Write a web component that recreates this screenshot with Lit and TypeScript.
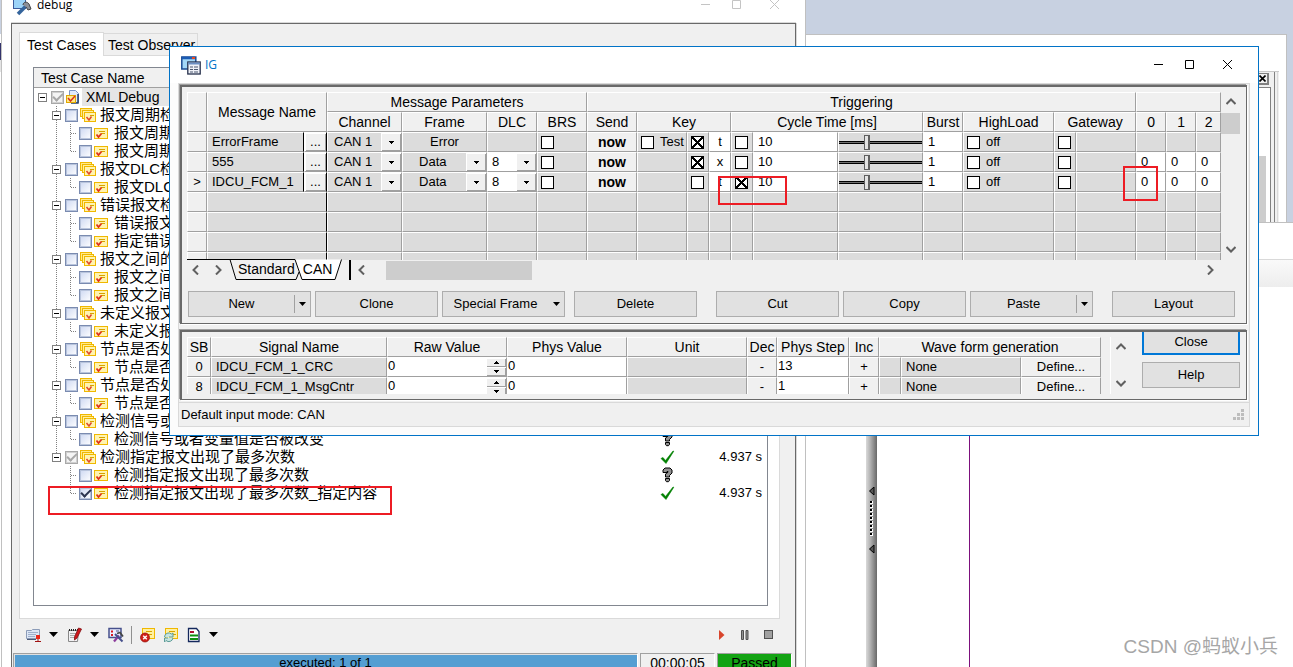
import { LitElement, html, svg, css, nothing } from "lit";
import { customElement } from "lit/decorators.js";
import { classMap } from "lit/directives/class-map.js";

const shared = css`
  * { box-sizing: border-box; }
  button, input, select {
    font: inherit; color: inherit; margin: 0; padding: 0; border: 0;
    background: none; border-radius: 0; outline: none; appearance: none;
  }
  svg { display: block; flex: none; }
`;

const arrowDown = (w = 9, h = 5) => html`
  <svg width=${w} height=${h} viewBox="0 0 9 5"><path d="M0 0h9L4.500 5z" fill="#000" /></svg>`;
const tinyDown = html`<svg width="5" height="3" viewBox="0 0 5 3"><path d="M0 0h5v1H4v1H3v1H2V2H1V1H0z" fill="#000" /></svg>`;
const tinyUp = html`<svg width="5" height="3" viewBox="0 0 5 3"><path d="M0 3h5V2H4V1H3V0H2v1H1v1H0z" fill="#000" /></svg>`;

/* ---------------------------------------------------------------- debug */

type Kind = "root" | "group" | "test";
interface Node {
  kind: Kind; text: string; last?: boolean; check?: "on" | "mixed"; verdict?: "ok" | "none"; time?: string;
}
const g = (text: string, more: Partial<Node> = {}): Node => ({ kind: "group", text, verdict: "none", ...more });
const t = (text: string, more: Partial<Node> = {}): Node => ({ kind: "test", text, verdict: "none", ...more });

const TREE: Node[] = [
  { kind: "root", text: "XML Debug", check: "mixed", verdict: "ok" },
  g("报文周期检测"), t("报文周期检测"), t("报文周期检测", { last: true }),
  g("报文DLC检测"), t("报文DLC检测", { last: true }),
  g("错误报文检测"), t("错误报文检测"), t("指定错误报文检测", { last: true }),
  g("报文之间的间隔"), t("报文之间的间隔"), t("报文之间的间隔", { last: true }),
  g("未定义报文检测"), t("未定义报文检测", { last: true }),
  g("节点是否处于激活"), t("节点是否处于激活", { last: true }),
  g("节点是否处于休眠"), t("节点是否处于休眠", { last: true }),
  g("检测信号或者变量值是否被改变"), t("检测信号或者变量值是否被改变", { last: true }),
  g("检测指定报文出现了最多次数", { check: "mixed", verdict: "ok", time: "4.937 s", last: true }),
  t("检测指定报文出现了最多次数"),
  t("检测指定报文出现了最多次数_指定内容", { check: "on", verdict: "ok", time: "4.937 s", last: true }),
];
const LAST_GROUP = TREE.map(n => n.kind === "group").lastIndexOf(true);

const expander = (x: number) => svg`
  <rect x=${x + 0.5} y="5.500" width="8" height="8" fill="#fff" stroke="#808080" />
  <path d="M${x + 2} 9.500h5" stroke="#000" />`;
const dots = (d: string) => svg`<path d=${d} stroke="#808080" stroke-dasharray="1 1" fill="none" />`;

function guide(n: Node, i: number) {
  if (n.kind === "root")
    return html`<button class="twist" aria-label="Collapse"><svg width="17" height="18">${expander(4)}</svg></button>`;
  if (n.kind === "group")
    return html`<button class="twist" aria-label="Collapse"><svg width="31" height="18">
      ${dots(i === LAST_GROUP ? "M22.500 0V9" : "M22.500 0V18")}${expander(18)}</svg></button>`;
  return html`<svg width="45" height="18">
    ${i < LAST_GROUP ? dots("M22.500 0V18") : nothing}
    ${dots(n.last ? "M36.500 0V10" : "M36.500 0V18")}${dots("M37 9.500H42")}</svg>`;
}

const rootIcon = html`<svg width="16" height="16" viewBox="0 0 16 16">
  <path d="M4.500 1.500h6l3 3v9h-9z" fill="#dfe9fb" stroke="#7c94c4" /><path d="M13 5v9H6" stroke="#27406e" fill="none" stroke-width="1.500" />
  <rect x="1.500" y="6.500" width="9" height="7" fill="#ffe98a" stroke="#e0a800" />
  <path d="M3 9l2.500 3L10 7" stroke="#d8321c" stroke-width="1.500" fill="none" /></svg>`;
const groupIcon = html`<svg width="18" height="16" viewBox="0 0 18 16">
  <rect x="1.500" y="1.500" width="11" height="8" fill="#ffe98a" stroke="#f0b800" />
  <rect x="3.500" y="3.500" width="11" height="8" fill="#ffef9f" stroke="#f0b800" />
  <rect x="5.500" y="5.500" width="11" height="9" fill="#fff3b0" stroke="#f0b800" />
  <path d="M11 8.500h4" stroke="#d8a400" />
  <path d="M7.500 10l2.500 3 2.500-3.500" stroke="#e04a2c" stroke-width="1.500" fill="none" /></svg>`;
const testIcon = html`<svg width="16" height="16" viewBox="0 0 16 16">
  <rect x="1.500" y="3.500" width="13" height="10" fill="#fff3b0" stroke="#f0b800" />
  <path d="M6 6.500h6M8 8.500h4" stroke="#d8a400" />
  <path d="M3.500 9.500l2 2.500L8.500 8.500" stroke="#e0321c" stroke-width="1.800" fill="none" /></svg>`;
const okIcon = html`<svg width="16" height="16" viewBox="0 0 16 16">
  <path d="M1 9.500L3 8.500l2.500 3L13 2l.8.2L6 14.500z" fill="#008000" stroke="#008000" stroke-width=".6" /></svg>`;
const noneIcon = html`<svg width="16" height="16" viewBox="0 0 16 16">
  <path d="M3 5.500V3L5 1h5l2 2v3L9.500 8.500V10h-4V7L8 5.200V4.500H7v1z" fill="#909090" stroke="#000" stroke-linejoin="round" />
  <path d="M5.500 11.500h4v2l-1 1.200h-2l-1-1.200z" fill="#909090" stroke="#000" /></svg>`;

const toolIcons = {
  report: html`<svg width="16" height="16" viewBox="0 0 16 16"><path d="M.5 3.500h5l1-1h7v9H.5z" fill="#dce6f6" stroke="#8c9cb8" />
    <path d="M2 5.500h10M2 7.500h8M2 9.500h7" stroke="#9fb0cc" /><path d="M1 12.500h9" stroke="#4c5a78" />
    <rect x="10" y="8" width="4" height="4" fill="#e8281c" /><path d="M9 14.500h6M12 12v2" stroke="#a01010" /></svg>`,
  edit: html`<svg width="16" height="16" viewBox="0 0 16 16"><path d="M1.500 3.500h10l-1 11h-9z" fill="#f2f2f4" stroke="#888" />
    <path d="M2 3h9" stroke="#222" stroke-width="2" stroke-dasharray="1 1" /><path d="M3 6.500h6M3 8.500h5M3 10.500h4" stroke="#aaa" />
    <path d="M11.500 1l3 1-4.500 9-2.500 2v-3z" fill="#d0181c" stroke="#7c0c10" stroke-width=".8" /></svg>`,
  config: html`<svg width="16" height="16" viewBox="0 0 16 16"><rect x="1" y="1.500" width="12" height="9" fill="#eceeff" stroke="#46508c" stroke-width="1.500" />
    <path d="M3 4.500h2M3 8h2" stroke="#d81820" stroke-width="2" /><path d="M8 4h3" stroke="#444c84" />
    <path d="M6 14.500l5-6" stroke="#8c3c9c" stroke-width="2.200" /><path d="M7 7l7.500 7.500" stroke="#46508c" stroke-width="2" /><path d="M9 6.500l3-1 3 4" stroke="#444" stroke-width="1.800" fill="none" /></svg>`,
  remove: html`<svg width="16" height="16" viewBox="0 0 16 16"><rect x="2.500" y="1.500" width="12" height="10" fill="#fff0a0" stroke="#f0b800" />
    <path d="M6 4.500h6M8 7.500h4" stroke="#d8a400" /><circle cx="5" cy="10.500" r="4.500" fill="#d02018" stroke="#8c0c08" stroke-width=".7" />
    <path d="M3.200 8.700l3.600 3.600M6.800 8.700l-3.600 3.600" stroke="#fff" stroke-width="1.400" /></svg>`,
  refresh: html`<svg width="16" height="16" viewBox="0 0 16 16"><rect x="2.500" y="1.500" width="12" height="10" fill="#fff0a0" stroke="#f0b800" />
    <path d="M6 4.500h6M10 7.500h3" stroke="#d8a400" /><path d="M1.500 10a4.200 4.200 0 0 1 7-3l1.500-1v4H6M10 11a4.200 4.200 0 0 1-7 2.500L1.500 15v-4H5" fill="#c8e4e0" stroke="#5c9c98" /></svg>`,
  doc: html`<svg width="14" height="16" viewBox="0 0 14 16"><path d="M1.500 1.500h8l2.500 3v10H1.500z" fill="#fff" stroke="#14285c" stroke-width="1.300" />
    <path d="M3 5h4" stroke="#b01030" stroke-width="2" /><path d="M3 8.500h8M3 12h8" stroke="#109010" stroke-width="2.200" /></svg>`,
};

@customElement("debug-window")
class DebugWindow extends LitElement {
  static styles = [shared, css`
    :host { display: flex; flex-direction: column; background: #fff; border: 1px solid #c0c0c0; border-width: 0 1px;
      font: 13px/18px "Liberation Sans", "Noto Sans CJK SC", sans-serif; color: #000; overflow: hidden; }
    .title { height: 35px; display: flex; align-items: center; padding: 0 20px 2px 10px; gap: 3px;
      font: 12px/16px "Open Sans", sans-serif; }
    .title .name { flex: 1; }
    .panel { flex: 1; min-height: 0; margin: 0 9px; border: 1px solid #696969; border-bottom: 0; background: #f0f0f0;
      box-shadow: 0 -1px #d9d9d9, 1px 0 #d9d9d9; display: flex; flex-direction: column; padding-top: 8px; }
    .tabs { display: flex; align-items: flex-end; margin-left: 7px; font-size: 14px; }
    .tab { height: 22px; padding: 0 0 0 4px; width: 94px; text-align: left; border: 1px solid #dadada; border-width: 1px 1px 0 0; overflow: hidden; white-space: nowrap; }
    .tab.active { height: 24px; width: 85px; padding: 0 0 0 7px; background: #fff; border-left-width: 1px; position: relative; margin-bottom: -1px; }
    .page { flex: 1; min-height: 0; margin: 0 15px 0 7px; border: 1px solid #dadada; background: #fff; padding: 11px 11px 12px 13px; display: flex; }
    .list { flex: 1; min-width: 0; border: 1px solid #828790; overflow: hidden; }
    .head { height: 20px; background: #f0f0f0; border-bottom: 1px solid #a0a0a0; padding: 1px 0 0 7px; font-size: 14px; }
    .rows { list-style: none; margin: 0; padding: 0; }
    .row { display: flex; align-items: center; height: 18px; padding-right: 5px; }
    .label { display: flex; align-items: center; flex: 1; min-width: 0; font-size: 15px; white-space: nowrap; cursor: default; }
    .label .txt { padding-left: 5px; line-height: 18px; }
    .group .txt { padding-left: 3px; }
    .root .label { font-size: 14px; }
    .root .txt { background: #e5e5e5; flex: 1; padding-left: 4px; margin-left: 1px; }
    .twist { display: block; }
    .box { width: 13px; height: 13px; border: 1px solid #7a8bb0; flex: none; margin-right: 1px;
      background: linear-gradient(135deg, #cdd8f2, #fff); box-shadow: inset 0 0 0 1px #b8c4dc; display: grid; place-items: center; }
    .box:checked::after { content: ""; width: 8px; height: 4px; border: solid #2c3550; border-width: 0 0 2px 2px; transform: rotate(-45deg); margin-top: -3px; }
    .box.mixed { background: #f4f4f4; border-color: #a8a8a8; box-shadow: inset 0 0 0 1px #d0d0d0; }
    .box.mixed:checked::after { border-color: #a8a8a8; }
    .time { width: 86px; text-align: right; }
    .tools { height: 34px; display: flex; align-items: center; padding: 0 19px 3px 14px; }
    .tools button { height: 20px; display: flex; align-items: center; justify-content: center; }
    .ico { width: 16px; }
    .tools .drop { width: 25px; padding-right: 2px; }
    .sep { width: 1px; height: 18px; background: #909090; margin: 0 8px 0 7px; }
    .gap { margin-left: 7px; }
    .run { margin-left: auto; display: flex; gap: 7px; }
    .status { height: 34px; display: flex; gap: 2px; padding: 0 3px 0 1px; font-size: 14px; text-align: center; }
    .cell { height: 24px; border: 1px solid #a0a0a0; border-color: #a0a0a0 #fff #fff #a0a0a0; width: 75px; }
    .cell.bar { flex: 1; width: auto; background: #559ed2; box-shadow: inset 1px 1px #e0e0e0; font-size: 13px; }
    .cell.pass { background: #13a313; }
  `];
  render() {
    return html`
      <header class="title">
        <svg width="22" height="22" viewBox="0 0 22 22"><rect x="1.500" y="2.500" width="12" height="12" fill="#9cd4f8" stroke="#3c5c9c" />
          <path d="M6 20l8-8" stroke="#34649c" stroke-width="3.500" /><path d="M11 11c0-3 4-4 6-1l2 5-3 1-2-3" fill="#8c9098" stroke="#444" /></svg>
        <span class="name">debug</span>
        <svg width="84" height="12" viewBox="0 0 84 12" fill="none" stroke="#c4c4c4"><path d="M0 5.500h9M31.500 1.500h8v8h-8zM69 1l9 9M78 1l-9 9" /></svg>
      </header>
      <section class="panel">
        <nav class="tabs"><button class="tab active">Test Cases</button><button class="tab">Test Observer</button></nav>
        <div class="page"><div class="list">
          <div class="head">Test Case Name</div>
          <ul class="rows">${TREE.map((n, i) => html`
            <li class="row ${n.kind}">
              ${guide(n, i)}
              <label class="label">
                <input type="checkbox" class=${classMap({ box: true, mixed: n.check === "mixed" })} .checked=${!!n.check} />
                ${n.kind === "root" ? rootIcon : n.kind === "group" ? groupIcon : testIcon}
                <span class="txt">${n.text}</span>
              </label>
              ${n.verdict === "ok" ? okIcon : noneIcon}
              <span class="time">${n.time ?? ""}</span>
            </li>`)}
          </ul>
        </div></div>
        <div class="tools">
          <button class="ico" aria-label="Report">${toolIcons.report}</button>
          <button class="drop" aria-label="Report options">${arrowDown()}</button>
          <button class="ico" aria-label="Edit">${toolIcons.edit}</button>
          <button class="drop" aria-label="Edit options">${arrowDown()}</button>
          <button class="ico" aria-label="Configure">${toolIcons.config}</button>
          <span class="sep"></span>
          <button class="ico" aria-label="Remove">${toolIcons.remove}</button>
          <button class="ico gap" aria-label="Refresh">${toolIcons.refresh}</button>
          <button class="ico gap" aria-label="Document">${toolIcons.doc}</button>
          <button class="drop" aria-label="Document options">${arrowDown()}</button>
          <div class="run">
            <button class="ico" aria-label="Start"><svg width="6" height="10"><path d="M0 0l5.500 5L0 10z" fill="#d8452c" /></svg></button>
            <button class="ico" aria-label="Pause"><svg width="8" height="10"><path d="M.5.5h2v9h-2zM5 .5h2v9H5z" fill="#909090" stroke="#505050" /></svg></button>
            <button class="ico" aria-label="Stop"><svg width="9" height="9"><rect x=".5" y=".5" width="8" height="8" fill="#a0a0a0" stroke="#505050" /></svg></button>
          </div>
        </div>
        <footer class="status">
          <div class="cell bar">executed: 1 of 1</div><div class="cell">00:00:05</div><div class="cell pass">Passed</div>
        </footer>
      </section>`;
  }
}

/* ------------------------------------------------------------------- IG */

interface Msg { name: string; frame: string; dlc: string; keyLabel?: string; keyOn: boolean; key: string; cycleOn: boolean; bytes: string[]; current?: boolean; }
const MESSAGES: Msg[] = [
  { name: "ErrorFrame", frame: "Error", dlc: "", keyLabel: "Test", keyOn: true, key: "t", cycleOn: false, bytes: [] },
  { name: "555", frame: "Data", dlc: "8", keyOn: true, key: "x", cycleOn: false, bytes: ["0", "0", "0"] },
  { name: "IDCU_FCM_1", frame: "Data", dlc: "8", keyOn: false, key: "t", cycleOn: true, bytes: ["0", "0", "0"], current: true },
];
const SIGNALS = [
  { sb: "0", name: "IDCU_FCM_1_CRC", step: "13" },
  { sb: "8", name: "IDCU_FCM_1_MsgCntr", step: "1" },
];
const COLS = [20, 97, 23, 75, 85, 50, 50, 50, 50, 22, 22, 22, 85, 85, 40, 91, 22, 60, 30, 30, 25];
const SIGNAL_COLS = [24, 176, 120, 120, 120, 30, 72, 30, 22, 120, 80];
const colgroup = (cols: number[]) => html`<colgroup>${cols.map(w => html`<col style="width:${w}px" />`)}</colgroup>`;

const chevron = (d: string) => html`<svg width="10" height="10" viewBox="0 0 10 10"><path d=${d} fill="none" stroke="#606060" stroke-width="2" /></svg>`;
const UP = "M.5 7L5 2.500 9.500 7", DOWN = "M.5 3L5 7.500 9.500 3", LEFT = "M7 .5L2.500 5 7 9.500", RIGHT = "M3 .5L7.500 5 3 9.500";

@customElement("ig-dialog")
class IgDialog extends LitElement {
  static styles = [shared, css`
    :host { display: flex; flex-direction: column; background: #fcfcfc; border: 1px solid #0173c7;
      font: 14px/18px "Liberation Sans", sans-serif; color: #000; }
    .title { height: 36px; background: #fff; display: flex; align-items: center; padding: 0 24px 0 11px; gap: 4px; font: 12px/16px "Open Sans", sans-serif; color: #0173c7; }
    .title .name { flex: 1; }
    .client { margin: 0 8px 8px; border: 1px solid #d9d9d9; background: #f0f0f0; }
    .panel { margin: 1px 2px 0 1px; border: solid #696969; border-width: 2px 1px 1px 2px; box-shadow: -1px -1px #a0a0a0, 1px 1px #fff; padding: 5px 5px 6px; }
    .panel.signals { margin-top: 6px; padding: 0 6px 5px 5px; display: flex; overflow: hidden; }
    .grid { display: flex; }
    .clip { flex: 1; min-width: 0; height: 168px; overflow: hidden; }
    .signals .clip { height: 57px; margin-top: 5px; }
    table { width: 100%; table-layout: fixed; border-collapse: separate; border-spacing: 0; }
    th, td { height: 20px; padding: 0; font-weight: normal; border: 1px solid; border-color: #fff #a0a0a0 #a0a0a0 #fff; overflow: hidden; white-space: nowrap; text-align: center; line-height: 18px; }
    td { background: #dcdcdc; font-size: 13px; }
    td.w { background: #fff; }
    td.plain { background: #f0f0f0; }
    td.l { text-align: left; padding-left: 4px; }
    td.blk { border-right-color: #000; }
    td input, td select, td button { display: block; width: 100%; height: 18px; }
    td.w input { padding-left: 4px; }
    td.key input { padding: 0; text-align: center; }
    td .bold { font-weight: bold; font-size: 14px; }
    .combo { display: flex; height: 18px; }
    .combo select { flex: 1; min-width: 0; padding-left: 6px; }
    .combo.mid select { padding-left: 16px; }
    .combo.num select { padding-left: 4px; }
    .btn3 { background: #f0f0f0; box-shadow: inset 1px 1px #fff, inset -1px -1px #a0a0a0; }
    .combo .btn3 { width: 20px; display: grid; place-items: center; }
    .checkline { display: flex; align-items: center; gap: 6px; padding-left: 3px; height: 18px; }
    td input.box { width: 13px; height: 13px; border: 1px solid #000; background: #fff; padding: 0; flex: none; }
    td > input.box { margin-left: 3px; }
    input.box:checked { background: linear-gradient(45deg, transparent 44%, #000 44%, #000 56%, transparent 56%), linear-gradient(-45deg, #fff 44%, #000 44%, #000 56%, #fff 56%); background-size: 11px 11px; }
    td input.slide { height: 18px; }
    .slide::-webkit-slider-runnable-track { height: 3px; background: #707070; border: 1px solid #000; border-width: 1px 0; }
    .slide::-webkit-slider-thumb { appearance: none; width: 6px; height: 15px; margin-top: -7px; background: #e4e4e4; border: 1px solid #606060; border-right-width: 2px; }
    .vbar { width: 20px; height: 168px; display: flex; flex-direction: column; align-items: center; padding: 5px 1px 6px 0; }
    .vbar button { display: grid; height: 10px; }
    .thumb { width: 19px; height: 21px; background: #cdcdcd; margin: 6px 0 auto; }
    .signals .vbar { width: 22px; height: 57px; justify-content: space-between; margin: 5px 10px 0 9px; border-left: 1px solid #fff; padding: 5px 1px 6px 0; }
    .sheet { display: flex; align-items: center; height: 20px; margin-bottom: 11px; }
    .nav { display: flex; width: 43px; padding-left: 4px; gap: 12px; }
    .nav button, .hbar button { display: block; }
    .tabs { position: relative; width: 121px; height: 20px; border-right: 2px solid #000; display: flex; }
    .tabs svg { position: absolute; left: -43px; top: -1px; }
    .tabs button { position: relative; height: 18px; margin-left: 8px; font-size: 14px; }
    .hbar { flex: 1; display: flex; align-items: center; height: 20px; padding: 0 26px 0 6px; }
    .hthumb { width: 17%; height: 19px; background: #cdcdcd; margin: 0 auto 0 19px; }
    .actions { display: flex; gap: 4px; padding: 0 6px 0 1px; }
    .push { flex: 1; height: 26px; background: #e1e1e1; border: 1px solid #adadad; display: flex; align-items: center; font-size: 13px; }
    .push span { flex: 1; text-align: center; }
    .push i { width: 16px; height: 18px; display: grid; place-items: center; border-left: 1px solid #a0a0a0; }
    .push i.free { border: 0; }
    .g5 { margin-left: 5px; }
    .g15 { margin-left: 15px; }
    .side { width: 98px; display: flex; flex-direction: column; gap: 7px; margin-top: -3px; }
    .side .push { flex: none; }
    .push.default { border: 2px solid #0078d7; }
    .spin { display: flex; }
    .spin div { width: 20px; flex: none; }
    .spin button { height: 9px; display: grid; place-items: center; }
    .signals td.w input { padding-left: 0; height: 16px; line-height: 16px; margin-bottom: 2px; }
    .status { margin-top: 2px; border-top: 1px solid #d9d9d9; height: 24px; padding: 0 5px 0 2px; display: flex; align-items: center; justify-content: space-between; font-size: 13px; }
  `];
  combo(label: string, value: string, cls = "") {
    return html`<div class="combo ${cls}"><select aria-label=${label}><option>${value}</option></select>
      <span class="btn3">${tinyDown}</span></div>`;
  }
  box(label: string, on = false) {
    return html`<input class="box" type="checkbox" aria-label=${label} .checked=${on} />`;
  }
  message(m: Msg) {
    const err = m.frame === "Error";
    return html`<tr>
      <td class="plain">${m.current ? ">" : ""}</td>
      <td class="l blk">${m.name}</td>
      <td class="plain blk"><button class="btn3" aria-label="Select ${m.name}">...</button></td>
      <td>${this.combo("Channel", "CAN 1")}</td>
      <td>${err ? "Error" : this.combo("Frame", m.frame, "mid")}</td>
      <td class=${err ? "" : "w"}>${err ? "" : this.combo("DLC", m.dlc, "num")}</td>
      <td>${this.box("BRS")}</td>
      <td class="plain"><button class="bold">now</button></td>
      <td>${m.keyLabel ? html`<label class="checkline">${this.box(m.keyLabel)}${m.keyLabel}</label>` : ""}</td>
      <td>${this.box("Key enabled", m.keyOn)}</td>
      <td class="w key"><input aria-label="Key" value=${m.key} /></td>
      <td>${this.box("Cyclic", m.cycleOn)}</td>
      <td class="w"><input aria-label="Cycle time" value="10" /></td>
      <td><input class="slide" type="range" aria-label="Cycle slider" min="0" max="100" value="33" /></td>
      <td class="w"><input aria-label="Burst" value="1" /></td>
      <td><label class="checkline">${this.box("HighLoad")}off</label></td>
      <td>${this.box("Gateway")}</td><td></td>
      ${[0, 1, 2].map(i => m.bytes[i] ? html`<td class="w"><input aria-label="Byte ${i}" value=${m.bytes[i]} /></td>` : html`<td></td>`)}
    </tr>`;
  }
  render() {
    return html`
      <header class="title">
        <svg width="20" height="19" viewBox="0 0 20 19"><rect x=".8" y="1" width="14" height="12" fill="#a4d8f8" stroke="#1c4c94" stroke-width="1.500" />
          <path d="M1 2h13" stroke="#1c5cb4" stroke-width="2.500" /><path d="M11 2h3" stroke="#e84820" stroke-width="2" />
          <rect x="6.800" y="6" width="12.400" height="12" fill="#f0f2f8" stroke="#26304c" stroke-width="1.300" />
          <path d="M7 7.500h12" stroke="#6c90c4" stroke-width="2" /><path d="M9 11h3M13 11h4M9 13.500h3M13 13.500h4M9 16h3M13 16h4" stroke="#4c5870" /></svg>
        <span class="name">IG</span>
        <svg width="80" height="12" viewBox="0 0 80 12" fill="none" stroke="#000"><path d="M0 5.500h9M31.500 1.500h8v8h-8zM69 1l9 9M78 1l-9 9" /></svg>
      </header>
      <div class="client">
        <section class="panel">
          <div class="grid">
            <div class="clip"><table>
              ${colgroup(COLS)}
              <thead>
                <tr><th rowspan="2"></th><th rowspan="2" colspan="2">Message Name</th><th colspan="4">Message Parameters</th><th colspan="11">Triggering</th><th colspan="3"></th></tr>
                <tr><th>Channel</th><th>Frame</th><th>DLC</th><th>BRS</th><th>Send</th><th colspan="3">Key</th><th colspan="3">Cycle Time [ms]</th>
                  <th>Burst</th><th>HighLoad</th><th colspan="2">Gateway</th><th>0</th><th>1</th><th>2</th></tr>
              </thead>
              <tbody>
                ${MESSAGES.map(m => this.message(m))}
                ${[0, 1, 2, 3].map(() => html`<tr><td class="plain"></td><td colspan="2" class="blk"></td>${COLS.slice(3).map(() => html`<td></td>`)}</tr>`)}
              </tbody>
            </table></div>
            <div class="vbar"><button aria-label="Scroll up">${chevron(UP)}</button><div class="thumb"></div><button aria-label="Scroll down">${chevron(DOWN)}</button></div>
          </div>
          <div class="sheet">
            <div class="nav"><button aria-label="Previous sheet">${chevron(LEFT)}</button><button aria-label="Next sheet">${chevron(RIGHT)}</button></div>
            <div class="tabs">
              <svg width="160" height="21" viewBox="0 0 160 21"><path d="M108 0.500L115 20h33L154 0.500z" fill="#fff" />
                <path d="M0 .5H108M43 .5L49 20.500H109L112 13M108 .5L115 20.500H148L154.500 .5" fill="none" stroke="#000" /></svg>
              <button>Standard</button><button>CAN</button>
            </div>
            <div class="hbar"><button aria-label="Scroll left">${chevron(LEFT)}</button><div class="hthumb"></div><button aria-label="Scroll right">${chevron(RIGHT)}</button></div>
          </div>
          <div class="actions">
            <button class="push"><span>New</span><i>${arrowDown(7, 4)}</i></button>
            <button class="push"><span>Clone</span></button>
            <button class="push"><span>Special Frame</span><i class="free">${arrowDown(7, 4)}</i></button>
            <button class="push g5"><span>Delete</span></button>
            <button class="push g15"><span>Cut</span></button>
            <button class="push"><span>Copy</span></button>
            <button class="push"><span>Paste</span><i>${arrowDown(7, 4)}</i></button>
            <button class="push g15"><span>Layout</span></button>
          </div>
        </section>
        <section class="panel signals">
          <div class="clip"><table>
            ${colgroup(SIGNAL_COLS)}
            <thead><tr><th>SB</th><th>Signal Name</th><th>Raw Value</th><th>Phys Value</th><th>Unit</th><th>Dec</th><th>Phys Step</th><th>Inc</th><th colspan="3">Wave form generation</th></tr></thead>
            <tbody>${SIGNALS.map(s => html`<tr>
              <td class="plain">${s.sb}</td><td class="l">${s.name}</td>
              <td class="w"><div class="spin"><input aria-label="Raw value" value="0" />
                <div><button class="btn3" aria-label="Increase">${tinyUp}</button>
                <button class="btn3" aria-label="Decrease">${tinyDown}</button></div></div></td>
              <td class="w"><input aria-label="Physical value" value="0" /></td><td></td>
              <td class="plain"><button>-</button></td>
              <td class="w"><input aria-label="Physical step" value=${s.step} /></td>
              <td class="plain"><button>+</button></td>
              <td></td><td class="l">None</td><td class="plain"><button>Define...</button></td>
            </tr>`)}</tbody>
          </table></div>
          <div class="vbar"><button aria-label="Scroll up">${chevron(UP)}</button><button aria-label="Scroll down">${chevron(DOWN)}</button></div>
          <div class="side"><button class="push default"><span>Close</span></button><button class="push"><span>Help</span></button></div>
        </section>
        <footer class="status">Default input mode: CAN
          <svg width="11" height="11" fill="#bdbdbd"><path d="M8 0h3v3H8zM8 4h3v3H8zM4 4h3v3H4zM8 8h3v3H8zM4 8h3v3H4zM0 8h3v3H0z" /></svg>
        </footer>
      </div>`;
  }
}

/* -------------------------------------------------------------- desktop */

@customElement("app-root")
class AppRoot extends LitElement {
  static styles = [shared, css`
    :host { display: block; position: relative; width: 100%; height: 100vh; overflow: hidden; background: #c8d1e1; }
    .back, .trace, .debug, .ig, .edge, .mark, .brand { position: absolute; }
    .edge { left: 0; top: 34px; bottom: 0; width: 1px; background: linear-gradient(#fff 9px, #34346c 9px 26px, #e4e4e4 26px 38px, #fff 38px); }
    .back { left: 805px; right: 6px; top: 34px; height: 190px; background: #fff; border: 1px solid #c0c0c0; display: flex; justify-content: flex-end; padding-top: 36px; }
    .dock { display: flex; align-items: flex-start; border-top: 1px solid #c8c8c8; margin-right: 7px; background: #f0f0f0; padding-right: 1px; width: 60px; justify-content: flex-end; }
    .inner { border: 1px solid #808080; border-left: 0; background: #fff; height: 160px; width: 30px; margin-top: 15px; padding: 68px 4px 0 0; }
    .inner div { background: #cdcdcd; height: 100%; }
    .x { position: absolute; right: 17px; top: 38px; width: 12px; height: 12px; border: 1px solid #808080; border-width: 1px 2px 2px 1px; background: #f0f0f0; display: grid; place-items: center; }
    .rail { border-left: 1px solid #808080; border-right: 1px solid #d9d9d9; width: 4px; height: 170px; margin-left: 3px; }
    .trace { left: 805px; right: 0; top: 222px; bottom: 0; background: #fff; border-top: 1px solid #c0c0c0; display: flex; flex-direction: column; }
    .band { margin-top: 36px; height: 28px; flex: none; border-top: 1px solid #d9d9d9; background: linear-gradient(#fafafa, #ededed); }
    .split { flex: 1; display: flex; padding-left: 61px; }
    .bar { width: 11px; background: linear-gradient(90deg, #dadada, #b0b0b0 40%, #686868); display: flex; flex-direction: column; align-items: center; padding-top: 200px; }
    .view { width: 93px; border-right: 1px solid #7c107c; }
    .debug { left: 1px; right: 487px; top: -12px; bottom: -20px; }
    .ig { left: 169px; right: 34px; top: 46px; }
    .mark { border: 2px solid #ed1c24; pointer-events: none; }
    .m1 { left: 48px; top: 486px; width: 344px; height: 29px; }
    .m2 { left: 718px; top: 176px; width: 69px; height: 29px; }
    .m3 { left: 1123px; top: 166px; width: 35px; height: 35px; }
    .brand { right: 15px; bottom: 7px; font: 19px/26px "Liberation Sans", "Noto Sans CJK SC", sans-serif; color: #a6a6a6; }
  `];
  render() {
    return html`
      <div class="edge"></div>
      <div class="back"><div class="dock"><div class="inner"><div></div></div><div class="rail"></div></div>
        <span class="x"><svg width="7" height="7"><path d="M.5.5l6 6M6.500.5l-6 6" stroke="#000" stroke-width="1.600" /></svg></span></div>
      <div class="trace"><div class="band"></div><div class="split"><div class="bar">
        <svg width="7" height="68" viewBox="0 0 7 68"><path d="M6 0v8L1.500 4zM6 58v8L1.500 62z" fill="#555" stroke="#000" />
          <path d="M3.500 14V50" stroke="#fff" stroke-width="3" stroke-dasharray="3 1" /><path d="M3 14V50" stroke="#000" stroke-width="2" stroke-dasharray="2 2" /></svg>
      </div><div class="view"></div></div></div>
      <debug-window class="debug"></debug-window>
      <ig-dialog class="ig"></ig-dialog>
      <div class="mark m1"></div><div class="mark m2"></div><div class="mark m3"></div>
      <span class="brand">CSDN @蚂蚁小兵</span>`;
  }
}
